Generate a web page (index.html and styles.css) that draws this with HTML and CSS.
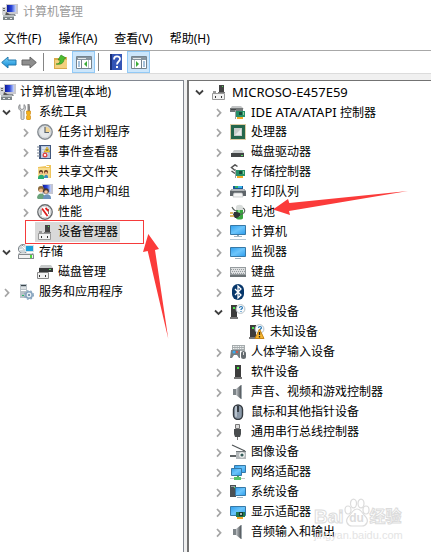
FILE: index.html
```html
<!DOCTYPE html>
<html lang="zh-CN">
<head>
<meta charset="utf-8">
<meta name="viewport" content="width=device-width, initial-scale=1">
<title>计算机管理</title>
<link rel="stylesheet" href="styles.css">
</head>
<body>
<svg class="sprite" aria-hidden="true">
  <defs>
    <linearGradient id="g-blue" x1="0" y1="0" x2="1" y2="1"><stop offset="0" stop-color="#2e9fee"/><stop offset=".5" stop-color="#6cc5fb"/><stop offset="1" stop-color="#2c9cec"/></linearGradient>
    <linearGradient id="g-navy" x1="0" y1="0" x2="1" y2="0"><stop offset="0" stop-color="#0c1a9c"/><stop offset=".5" stop-color="#2c47d8"/><stop offset="1" stop-color="#c8d8ff"/></linearGradient>
    <linearGradient id="g-grey" x1="0" y1="0" x2="1" y2="0"><stop offset="0" stop-color="#c4c8cb"/><stop offset="1" stop-color="#50565a"/></linearGradient>
    <linearGradient id="g-arrow" x1="0" y1="0" x2="0" y2="1"><stop offset="0" stop-color="#7bd4fa"/><stop offset="1" stop-color="#0c86d4"/></linearGradient>
  </defs>
  <symbol id="i-down" viewBox="0 0 13 13"><path d="M3 4.500l3.500 3.500L10 4.500" fill="none" stroke="#404040" stroke-width="1.800"/></symbol>
  <symbol id="i-right" viewBox="0 0 13 13"><path d="M5 3l3.600 3.800L5 10.600" fill="none" stroke="#a6a6a6" stroke-width="1.700"/></symbol>
  <symbol id="i-mmc" viewBox="0 0 16 16"><path d="M4 0h12v10H4z" fill="#c9c9cf"/><path d="M5 1h9v7H5z" fill="url(#g-navy)"/><path d="M8 10h5l1 2H8z" fill="#8a8f94"/><path d="M0 3h4v8H0z" fill="#d5d7da"/><path d="M1 4h2v1H1zM1 6h2v1H1z" fill="#666"/><path d="M4 8l5 3v1H3z" fill="#555"/><path d="M1 11h11v5H1z" fill="#7c8588"/><path d="M1 11h11v2H1z" fill="#b6bdbf"/><path d="M3 14h2v1H3zM8 14h2v1H8z" fill="#eee"/></symbol>
  <symbol id="i-tools" viewBox="0 0 16 16"><path d="M2 .5v4l2 1 2-1v-4c2 1.500 2 5 0 6.500v7.500c0 1.500-3 1.500-3 0V7C0 5.500 0 2 2 .5z" fill="#dcdee0" stroke="#787b7e" stroke-width=".8"/><path d="M9.500 0h2l.5 3v4H9.500z" fill="#888"/><path d="M8.500 7h4v3l-1 1 1 1v3l-1 1h-2l-1-1v-3l1-1-1-1z" fill="#f4b21c" stroke="#c98108" stroke-width=".6"/></symbol>
  <symbol id="i-clock" viewBox="0 0 16 16"><circle cx="8" cy="8" r="7.200" fill="#e5e8eb" stroke="#858b91" stroke-width="1.400"/><path d="M8 2.500A5.500 5.500 0 0 1 13.500 8H8z" fill="#f2d593"/><circle cx="8" cy="8" r="5.700" fill="none" stroke="#c3c8cd" stroke-width=".6"/><path d="M8 3v5.500h4" fill="none" stroke="#5b6670" stroke-width="1.200"/></symbol>
  <symbol id="i-event" viewBox="0 0 16 16"><path d="M2 1h12v14H2z" fill="#40567d"/><path d="M4 2h9v12H4z" fill="#b8c8e0"/><path d="M5 4h6M5 7h6M5 10h6" stroke="#fff"/><path d="M0 3h3M0 6h3M0 9h3M0 12h3" stroke="#788493"/><path d="M10 3l3 5H7z" fill="#ffd63c" stroke="#b98200" stroke-width=".5"/><path d="M10 5v2" stroke="#333"/><circle cx="8" cy="11" r="2.500" fill="#e04848"/><path d="M7 10l2 2M9 10l-2 2" stroke="#fff" stroke-width=".9"/></symbol>
  <symbol id="i-share" viewBox="0 0 16 16"><path d="M1 3l8-1 1-1h4v13H1z" fill="#eec45b"/><path d="M1 4h12v10H1z" fill="#f8dc8d"/><path d="M9 2h3v1H9z" fill="#fff"/><circle cx="4" cy="8" r="2" fill="#5b351e"/><circle cx="9" cy="8" r="2" fill="#6b3a1d"/><circle cx="4" cy="9" r="1.300" fill="#efb58b"/><circle cx="9" cy="9" r="1.300" fill="#efb58b"/><path d="M1 14c0-4 6-4 6-1v2H1z" fill="#27ad72"/><path d="M7 14c0-4 4-4 4-1v1z" fill="#3b8cbf"/></symbol>
  <symbol id="i-users" viewBox="0 0 16 16"><path d="M5 0h11v10H5z" fill="#c4c6d3"/><path d="M6 1h8v7H6z" fill="url(#g-navy)"/><circle cx="4" cy="5" r="3" fill="#8a6a3c"/><circle cx="4" cy="6.500" r="2" fill="#edb486"/><circle cx="9" cy="7" r="2.800" fill="#4c382a"/><circle cx="9" cy="8" r="1.800" fill="#f2c29d"/><path d="M0 14c0-6 8-6 8 0v1H1z" fill="#6aa37c"/><path d="M6 14c0-5 8-5 8 0v1H6z" fill="#6d93bd"/></symbol>
  <symbol id="i-perf" viewBox="0 0 16 16"><circle cx="8" cy="8" r="7.200" fill="#fff" stroke="#696d70" stroke-width="1.400"/><circle cx="8" cy="8" r="5.700" fill="none" stroke="#bfc3c5" stroke-width=".7"/><path d="M4 11V5.500M11.500 10V5" fill="none" stroke="#777" stroke-width="1"/><path d="M5 4.500l5.500 7.500M8.500 4l3 3" stroke="#df1f1f" stroke-width="1.800"/></symbol>
  <symbol id="i-device" viewBox="0 0 16 16"><path d="M8 1h5v8H8z" fill="#444"/><path d="M11 2h1v1h-1z" fill="#54d956"/><path d="M7 8h7v1H7z" fill="#777"/><path d="M2 7h3v2H2z" fill="#999"/><path d="M1.500 9.500h12v6h-12z" fill="#f2f2f2" stroke="#999"/><path d="M4 12h1v2H4zM10 12h1v2h-1z" fill="#333"/></symbol>
  <symbol id="i-storage" viewBox="0 0 16 16"><ellipse cx="5" cy="5" rx="4.600" ry="4.500" fill="#cdd5d9" stroke="#82898e"/><path d="M5 1l2 4-3-3M1 6l4-1" stroke="#fff"/><path d="M7 1h9v7H7z" fill="#d6e0e5"/><path d="M8 2h7v5H8z" fill="#1a9fd9"/><path d="M1 9h14l1 2v4H0v-4z" fill="#858a8e"/><path d="M2 9h12l1 1H1z" fill="#dde0e2"/><path d="M1 11h14v3H1z" fill="#f1f1f1"/><path d="M12 11h2v3h-2z" fill="#50d83c"/></symbol>
  <symbol id="i-diskm" viewBox="0 0 16 16"><path d="M4 1h10l2 3H2z" fill="#c7caca"/><path d="M2 4h14v4H2z" fill="#363839"/><path d="M12 5h2v1h-2z" fill="#57e064"/><path d="M.5 8.500h11v6H.5z" fill="#f2f2f2" stroke="#888"/><path d="M2 11h1v2H2zM8 11h1v2H8z" fill="#333"/></symbol>
  <symbol id="i-services" viewBox="0 0 16 16"><path d="M2 0h7v14H2z" fill="#b8c1c7"/><path d="M3 1h5v1H3z" fill="#3a454c"/><path d="M3 4h5M3 6.500h5" stroke="#fff"/><path d="M4 11h2v1H4z" fill="#26b56e"/><circle cx="11" cy="11" r="3.200" fill="#e9f0f5" stroke="#88a5bf" stroke-width="1.600"/><circle cx="11" cy="11" r="4.400" fill="none" stroke="#88a5bf" stroke-width="1.200" stroke-dasharray="1.600 2"/><circle cx="11" cy="11" r="1" fill="#587b9a"/></symbol>
  <symbol id="i-ide" viewBox="0 0 16 16"><path d="M2 2h9l3 3H0z" fill="#c3c5c6"/><path d="M0 4h13v4H0z" fill="#747879"/><path d="M1 5h5v1H1z" fill="#454849"/><path d="M6 7h9v6H6z" fill="#279067"/><path d="M9 8h3v3H9z" fill="#194c38"/><path d="M5.500 6v9" stroke="#9ca4a2"/><path d="M7 13h6v2H7z" fill="#f0ad27"/><path d="M13 8h1v3h-1z" fill="#8fd09e"/></symbol>
  <symbol id="i-cpu" viewBox="0 0 16 16"><path d="M.5.5h15v15H.5z" fill="none" stroke="#bd9a4a" stroke-dasharray="1 1"/><path d="M1 1h14v14H1z" fill="#25664b"/><path d="M4 4h8v8H4z" fill="#c9cdca"/><path d="M5 11l6-6v6z" fill="#e9ebe9"/></symbol>
  <symbol id="i-disk" viewBox="0 0 16 16"><path d="M4 6h8l2 3H2z" fill="#c9cccd"/><path d="M1 9h13v4H1z" fill="#424546"/><path d="M11 11h2v1h-2z" fill="#5ce367"/></symbol>
  <symbol id="i-stctl" viewBox="0 0 16 16"><path d="M7.500 2.500L5 .8 1.500 3.500 5 6.500M1.500 7L5 9.500" fill="none" stroke="#555" stroke-width="1.500"/><path d="M6 6h9v6H6z" fill="#279067"/><path d="M9 7h3v3H9z" fill="#194c38"/><path d="M5.500 5v9" stroke="#9ca4a2"/><path d="M7 12h6v2H7z" fill="#f0ad27"/><path d="M13 7h1v3h-1z" fill="#8fd09e"/></symbol>
  <symbol id="i-print" viewBox="0 0 16 16"><path d="M3 2h10v4H3z" fill="#19599a"/><path d="M5 2h3v2H5z" fill="#35ae65"/><path d="M8 2h4v2H8z" fill="#37b4e9"/><path d="M2 5h12l2 2v5h-3L12 9H4l-1 3H0V7z" fill="#5f656a"/><path d="M2 5h12l1 2H1z" fill="#b0b5b8"/><path d="M4 9h8l1 4H3z" fill="#f6f6f6" stroke="#b9bdbf" stroke-width=".7"/></symbol>
  <symbol id="i-battery" viewBox="0 0 16 16"><path d="M6 3h7v11c0 2-7 2-7 0z" fill="#39a53f"/><path d="M6 3c0-3 7-3 7 0v3H6z" fill="#d9dddb"/><path d="M8 6h2v7H8z" fill="#7edb7a"/><path d="M2 3c1 2 3 4 5 4M13 4c2.500 1 2.500 5-1 6l-4 1" fill="none" stroke="#5a605d" stroke-width="1.200"/><path d="M4 8h3l3 1v3l-3 2H5l-2-3z" fill="#303534"/><path d="M0 9h3M0 12h4" stroke="#d3a336" stroke-width="1.500"/></symbol>
  <symbol id="i-computer" viewBox="0 0 16 16"><path d="M.5 1.500h15v9H.5z" fill="url(#g-blue)" stroke="#3779a7"/><path d="M7 11h2v1H7z" fill="#8ea6b5"/><path d="M4 12h8v1H4z" fill="#9fb3c0"/><path d="M0 15h16v1H0z" fill="#b5c7d2"/></symbol>
  <symbol id="i-monitor" viewBox="0 0 16 16"><path d="M.5 3.500h15v9H.5z" fill="url(#g-blue)" stroke="#3779a7"/><path d="M5 14h6v1H5z" fill="#9fb3c0"/></symbol>
  <symbol id="i-keyboard" viewBox="0 0 16 16"><path d="M0 3h16v10H0z" fill="#959b9e"/><path d="M1 4h14v6H1z" fill="#dee0e1"/><path d="M1 5.500h14M2 7.500h13M1 9.500h14" stroke="#959b9e" stroke-dasharray="1 1"/><path d="M0 11h16v2H0z" fill="#6c7376"/></symbol>
  <symbol id="i-bt" viewBox="0 0 16 16"><rect x="2" width="12" height="16" rx="6" fill="#07376b"/><path d="M5 5l6 6-3 3V2l3 3-6 6" fill="none" stroke="#fff" stroke-width="1.300"/></symbol>
  <symbol id="i-unknown" viewBox="0 0 16 16"><path d="M1 1h6v12H1z" fill="#3c3c3c"/><path d="M0 13h8v2H0z" fill="#777"/><path d="M3 3h2v2H3z" fill="#4ce44d"/><circle cx="10.500" cy="5" r="4.400" fill="#f8fbfd" stroke="#b5c0c7"/><path d="M9.500 4c0-2 3-2 3 0L11 5.500V6M11 7v1" fill="none" stroke="#2476b7" stroke-width="1.100"/></symbol>
  <symbol id="i-warn" viewBox="0 0 16 16"><use href="#i-unknown"/><path d="M10.500 5l4.500 9.500H6z" fill="#f6b52d" stroke="#c4841a"/><path d="M10.500 8v3M10.500 12v1.500" stroke="#222" stroke-width="1.300"/></symbol>
  <symbol id="i-hid" viewBox="0 0 16 16"><path d="M2 1h13v6H2z" fill="#a5abad"/><path d="M3 2.500h11M3 4.500h11" stroke="#f2f4f4" stroke-dasharray="1.500 .8"/><path d="M1 6h9v8H9L7 11H4l-2 3H0z" fill="#757d81"/><circle cx="4" cy="8" r="1.500" fill="#38aaf0"/><circle cx="7" cy="8" r="1" fill="#ed4c3e"/><rect x="11" y="7" width="5" height="8" rx="2.500" fill="#656c70"/><path d="M13.500 8v3" stroke="#ddd"/></symbol>
  <symbol id="i-soft" viewBox="0 0 16 16"><path d="M5 1h6v12H5z" fill="#3d3d3d"/><path d="M4 13h8v2H4z" fill="#777"/><path d="M7 3h2v2H7z" fill="#42e442"/></symbol>
  <symbol id="i-sound" viewBox="0 0 16 16"><path d="M3 5h3v6H3z" fill="#7d8488"/><path d="M6 5l5-4v14l-5-4z" fill="url(#g-grey)"/><path d="M11 1h1v14h-1z" fill="#9fa8ad"/></symbol>
  <symbol id="i-mouse" viewBox="0 0 16 16"><rect x="3.500" y="1" width="9" height="14.500" rx="4.500" fill="#8a98a7" stroke="#343a40" stroke-width="1.400"/><rect x="5" y="2" width="2" height="11" rx="1" fill="#b7c2cc"/><path d="M8 2v6" stroke="#20262b" stroke-width="1.600"/></symbol>
  <symbol id="i-usb" viewBox="0 0 16 16"><path d="M5.500.5h4v4h-4z" fill="#ddd" stroke="#777"/><path d="M4 5h7v5l-1 3H5l-1-3z" fill="#4a4d4f"/><path d="M7 13h1v3H7z" fill="#777"/></symbol>
  <symbol id="i-camera" viewBox="0 0 16 16"><path d="M2 1l13 6" stroke="#515658" stroke-width="1.300"/><path d="M6 7h10v8H6z" fill="#b3b8ba"/><path d="M6 7h10v1H6z" fill="#72787b"/><circle cx="12" cy="11" r="2.800" fill="#f5f5f5"/><circle cx="12" cy="11" r="1.600" fill="#345c59"/><path d="M0 11h6v2H0z" fill="#606567"/></symbol>
  <symbol id="i-net" viewBox="0 0 16 16"><path d="M4.500 1.500h11v7h-11z" fill="url(#g-blue)" stroke="#3779a7"/><path d="M1.500 4.500h10v7h-10z" fill="url(#g-blue)" stroke="#3779a7"/><path d="M7 12h2v2H7z" fill="#4da65b"/><path d="M0 14h15v1H0z" fill="#c2cbc9"/><path d="M4 13h7v3H4z" fill="#56c46a"/></symbol>
  <symbol id="i-system" viewBox="0 0 16 16"><path d="M0 1h6v12H0z" fill="#4a5054"/><path d="M1 2h4v1H1z" fill="#9aa1a5"/><path d="M4 3h1v1H4z" fill="#51e55a"/><path d="M5.500 3.500h10v8h-10z" fill="url(#g-blue)" stroke="#3779a7"/><path d="M7 13h6v1H7z" fill="#9fb3c0"/></symbol>
  <symbol id="i-display" viewBox="0 0 16 16"><path d="M.5 2.500h15v9H.5z" fill="url(#g-blue)" stroke="#3779a7"/><path d="M6 8h9v5H6z" fill="#20784e"/><path d="M9 8h4v4H9z" fill="#17372f"/><path d="M10 9h2v2h-2z" fill="#a8b8ac"/><path d="M7 13h6v2H7z" fill="#efa427"/></symbol>
</svg>

<header class="title-bar">
  <svg class="icon" aria-hidden="true"><use href="#i-mmc"/></svg>
  <h1 class="title">计算机管理</h1>
</header>
<nav class="menu-bar">
  <button type="button">文件(F)</button>
  <button type="button">操作(A)</button>
  <button type="button">查看(V)</button>
  <button type="button">帮助(H)</button>
</nav>
<div class="tool-bar">
  <button type="button" class="tool" aria-label="后退"><svg class="icon" viewBox="0 0 16 16"><path d="M.7 8.500L7 3v3h8v5H7v3z" fill="url(#g-arrow)" stroke="#2378ac"/></svg></button>
  <button type="button" class="tool" aria-label="前进"><svg class="icon" viewBox="0 0 16 16"><path d="M15.300 8.500L9 3v3H1v5h8v3z" fill="#8e8e8e" stroke="#646464"/></svg></button>
  <span class="rule"></span>
  <button type="button" class="tool" aria-label="上一级"><svg class="icon" viewBox="0 0 16 16"><path d="M1 4h5l1 1h7v10H1z" fill="#d9a94b"/><path d="M9 3h5v3H9z" fill="#e3b65a"/><path d="M2 6h12v8H2z" fill="#f4d07d"/><path d="M3 10c3 0 4-1 4-4H5l3-5 5 3-2 1c0 4-3 6-8 5z" fill="#4dbc33" stroke="#278514" stroke-width=".6"/></svg></button>
  <button type="button" class="tool tool-on" aria-label="显示控制台树"><svg class="icon" viewBox="0 0 16 16"><path d="M.5 2.500h15v12H.5z" fill="#fff" stroke="#76838d"/><path d="M1 3h14v3H1z" fill="#87949e"/><path d="M2 4h8v1H2z" fill="#e4e8ea"/><path d="M5.500 6v8" stroke="#76838d"/><path d="M2 8h2M2 10h2M2 12h2" stroke="#4f86b9"/><path d="M11 7v6l-3-3z" fill="#3cac37"/><path d="M12.500 6v8" stroke="#b5bec4"/></svg></button>
  <span class="rule"></span>
  <button type="button" class="tool" aria-label="帮助"><svg class="icon" viewBox="0 0 16 16"><path d="M2 0h12v16H2z" fill="#3455b6"/><path d="M2 0h2v16H2z" fill="#1c3179"/><path d="M6 5.500c0-4 6-4 6-.5C12 7.500 9 7.500 9 10.500" fill="none" stroke="#fff" stroke-width="1.800"/><path d="M8 12h2v2H8z" fill="#fff"/></svg></button>
  <button type="button" class="tool tool-on" aria-label="显示操作窗格"><svg class="icon" viewBox="0 0 16 16"><path d="M.5 2.500h15v12H.5z" fill="#fff" stroke="#76838d"/><path d="M1 3h14v3H1z" fill="#87949e"/><path d="M2 4h8v1H2z" fill="#e4e8ea"/><path d="M10.500 6v8" stroke="#76838d"/><path d="M12 8h2M12 10h2M12 12h2" stroke="#4f86b9"/><path d="M5 7v6l3-3z" fill="#3cac37"/><path d="M3.500 6v8" stroke="#b5bec4"/></svg></button>
</div>

<main class="panes">
  <section class="pane pane-nav" aria-label="控制台树">
    <div class="row root"><svg class="icon"><use href="#i-mmc"/></svg><span>计算机管理(本地)</span></div>
    <ul>
      <li>
        <div class="row"><button type="button" class="toggle" aria-expanded="true" aria-label="系统工具"><svg><use href="#i-down"/></svg></button><svg class="icon"><use href="#i-tools"/></svg><span>系统工具</span></div>
        <ul class="nested">
          <li class="row"><button type="button" class="toggle" aria-label="任务计划程序"><svg><use href="#i-right"/></svg></button><svg class="icon"><use href="#i-clock"/></svg><span>任务计划程序</span></li>
          <li class="row"><button type="button" class="toggle" aria-label="事件查看器"><svg><use href="#i-right"/></svg></button><svg class="icon"><use href="#i-event"/></svg><span>事件查看器</span></li>
          <li class="row"><button type="button" class="toggle" aria-label="共享文件夹"><svg><use href="#i-right"/></svg></button><svg class="icon"><use href="#i-share"/></svg><span>共享文件夹</span></li>
          <li class="row"><button type="button" class="toggle" aria-label="本地用户和组"><svg><use href="#i-right"/></svg></button><svg class="icon"><use href="#i-users"/></svg><span>本地用户和组</span></li>
          <li class="row"><button type="button" class="toggle" aria-label="性能"><svg><use href="#i-right"/></svg></button><svg class="icon"><use href="#i-perf"/></svg><span>性能</span></li>
          <li class="row leaf marked"><span class="selected"><svg class="icon"><use href="#i-device"/></svg><span>设备管理器</span></span>
            <span class="mark-box"></span>
            <svg class="mark-up" viewBox="0 0 26 105" aria-hidden="true"><path d="M5.300 0L16 15l-4 1 13.300 89L4.700 17 0 18z" fill="#fb3b3a"/></svg></li>
        </ul>
      </li>
      <li>
        <div class="row"><button type="button" class="toggle" aria-expanded="true" aria-label="存储"><svg><use href="#i-down"/></svg></button><svg class="icon"><use href="#i-storage"/></svg><span>存储</span></div>
        <ul class="nested">
          <li class="row leaf"><svg class="icon"><use href="#i-diskm"/></svg><span>磁盘管理</span></li>
        </ul>
      </li>
      <li class="row"><button type="button" class="toggle" aria-label="服务和应用程序"><svg><use href="#i-right"/></svg></button><svg class="icon"><use href="#i-services"/></svg><span>服务和应用程序</span></li>
    </ul>
  </section>

  <section class="pane pane-devices" aria-label="设备">
    <div class="row"><button type="button" class="toggle" aria-expanded="true" aria-label="MICROSO-E457E59"><svg><use href="#i-down"/></svg></button><svg class="icon"><use href="#i-device"/></svg><span class="latin">MICROSO-E457E59</span></div>
    <ul class="nested">
      <li class="row"><button type="button" class="toggle" aria-label="IDE ATA/ATAPI 控制器"><svg><use href="#i-right"/></svg></button><svg class="icon"><use href="#i-ide"/></svg><span><span class="latin">IDE ATA/ATAPI </span>控制器</span></li>
      <li class="row"><button type="button" class="toggle" aria-label="处理器"><svg><use href="#i-right"/></svg></button><svg class="icon"><use href="#i-cpu"/></svg><span>处理器</span></li>
      <li class="row"><button type="button" class="toggle" aria-label="磁盘驱动器"><svg><use href="#i-right"/></svg></button><svg class="icon"><use href="#i-disk"/></svg><span>磁盘驱动器</span></li>
      <li class="row"><button type="button" class="toggle" aria-label="存储控制器"><svg><use href="#i-right"/></svg></button><svg class="icon"><use href="#i-stctl"/></svg><span>存储控制器</span></li>
      <li class="row"><button type="button" class="toggle" aria-label="打印队列"><svg><use href="#i-right"/></svg></button><svg class="icon"><use href="#i-print"/></svg><span>打印队列</span></li>
      <li class="row marked"><button type="button" class="toggle" aria-label="电池"><svg><use href="#i-right"/></svg></button><svg class="icon"><use href="#i-battery"/></svg><span>电池</span>
        <svg class="mark-left" viewBox="0 0 136 25" aria-hidden="true"><path d="M0 18.500L15 8l1.300 4L135 0 16 20l1 4z" fill="#fb3b3a"/></svg></li>
      <li class="row"><button type="button" class="toggle" aria-label="计算机"><svg><use href="#i-right"/></svg></button><svg class="icon"><use href="#i-computer"/></svg><span>计算机</span></li>
      <li class="row"><button type="button" class="toggle" aria-label="监视器"><svg><use href="#i-right"/></svg></button><svg class="icon"><use href="#i-monitor"/></svg><span>监视器</span></li>
      <li class="row"><button type="button" class="toggle" aria-label="键盘"><svg><use href="#i-right"/></svg></button><svg class="icon"><use href="#i-keyboard"/></svg><span>键盘</span></li>
      <li class="row"><button type="button" class="toggle" aria-label="蓝牙"><svg><use href="#i-right"/></svg></button><svg class="icon"><use href="#i-bt"/></svg><span>蓝牙</span></li>
      <li>
        <div class="row"><button type="button" class="toggle" aria-expanded="true" aria-label="其他设备"><svg><use href="#i-down"/></svg></button><svg class="icon"><use href="#i-unknown"/></svg><span>其他设备</span></div>
        <ul class="nested">
          <li class="row leaf"><svg class="icon"><use href="#i-warn"/></svg><span>未知设备</span></li>
        </ul>
      </li>
      <li class="row"><button type="button" class="toggle" aria-label="人体学输入设备"><svg><use href="#i-right"/></svg></button><svg class="icon"><use href="#i-hid"/></svg><span>人体学输入设备</span></li>
      <li class="row"><button type="button" class="toggle" aria-label="软件设备"><svg><use href="#i-right"/></svg></button><svg class="icon"><use href="#i-soft"/></svg><span>软件设备</span></li>
      <li class="row"><button type="button" class="toggle" aria-label="声音、视频和游戏控制器"><svg><use href="#i-right"/></svg></button><svg class="icon"><use href="#i-sound"/></svg><span>声音、视频和游戏控制器</span></li>
      <li class="row"><button type="button" class="toggle" aria-label="鼠标和其他指针设备"><svg><use href="#i-right"/></svg></button><svg class="icon"><use href="#i-mouse"/></svg><span>鼠标和其他指针设备</span></li>
      <li class="row"><button type="button" class="toggle" aria-label="通用串行总线控制器"><svg><use href="#i-right"/></svg></button><svg class="icon"><use href="#i-usb"/></svg><span>通用串行总线控制器</span></li>
      <li class="row"><button type="button" class="toggle" aria-label="图像设备"><svg><use href="#i-right"/></svg></button><svg class="icon"><use href="#i-camera"/></svg><span>图像设备</span></li>
      <li class="row"><button type="button" class="toggle" aria-label="网络适配器"><svg><use href="#i-right"/></svg></button><svg class="icon"><use href="#i-net"/></svg><span>网络适配器</span></li>
      <li class="row"><button type="button" class="toggle" aria-label="系统设备"><svg><use href="#i-right"/></svg></button><svg class="icon"><use href="#i-system"/></svg><span>系统设备</span></li>
      <li class="row"><button type="button" class="toggle" aria-label="显示适配器"><svg><use href="#i-right"/></svg></button><svg class="icon"><use href="#i-display"/></svg><span>显示适配器</span></li>
      <li class="row"><button type="button" class="toggle" aria-label="音频输入和输出"><svg><use href="#i-right"/></svg></button><svg class="icon"><use href="#i-sound"/></svg><span>音频输入和输出</span></li>
    </ul>
    <div class="watermark">
      <div class="wm-brand"><span class="wm-latin">Bai</span><span class="wm-paw"><svg viewBox="0 0 26 29" aria-hidden="true"><g fill="#fff" stroke="#dcdcdc" stroke-width="1.200"><ellipse cx="4" cy="12" rx="3" ry="4"/><ellipse cx="9.500" cy="5.500" rx="3" ry="4.300"/><ellipse cx="17" cy="5.500" rx="3" ry="4.300"/><ellipse cx="22" cy="12" rx="3" ry="4"/><path d="M13 11c4 0 5 4 8 7 5 5 1 10-3 10H8c-4 0-8-5-3-10 3-3 4-7 8-7z"/></g></svg><span class="wm-du">du</span></span><span class="wm-cjk">经验</span></div>
      <div class="wm-site">jingyan.baidu.com</div>
    </div>
  </section>
</main>
</body>
</html>
```
FILE: styles.css
```css
* {
  box-sizing: border-box;
}

body {
  display: flex;
  flex-direction: column;
  min-height: 100vh;
  margin: 0;
  background: #f0f0f0;
  color: #000;
  font: 12px/20px "Noto Sans", "Noto Sans CJK SC", sans-serif;
}

button {
  margin: 0;
  padding: 0;
  border: 0;
  background: none;
  color: inherit;
  font: inherit;
}

ul {
  margin: 0;
  padding: 0;
  list-style: none;
}

svg {
  display: block;
}

.sprite {
  position: absolute;
  width: 0;
  height: 0;
}

.icon {
  flex: none;
  width: 16px;
  height: 16px;
}

.title-bar {
  display: flex;
  align-items: center;
  gap: 5px;
  height: 24px;
  padding: 0 2px;
  background: #fff;
}

.title {
  margin: 0;
  color: #999;
  font-size: 12px;
  font-weight: 400;
}

.menu-bar {
  display: flex;
  gap: 17px;
  height: 26px;
  padding: 5px 4px 1px;
  background: #fff;
}

.tool-bar {
  display: flex;
  align-items: center;
  height: 24px;
  border-top: 1px solid #a8a8a8;
  border-bottom: 1px solid #dcdcdc;
  background: #fff;
}

.tool {
  display: grid;
  place-items: center;
  width: 23px;
  height: 22px;
}

.tool:first-child {
  width: 17px;
}

.tool-on {
  border: 1px solid #92c9f5;
  background: #cce6fb;
}

.rule {
  width: 1px;
  height: 18px;
  margin: 0 5px 0 3px;
  background: #858585;
}

.panes {
  display: flex;
  flex: 1;
  gap: 3px;
  margin-top: 6px;
}

.pane {
  position: relative;
  padding-top: 1px;
  border: 0 solid #828790;
  border-top-width: 1px;
  background: #fff;
  white-space: nowrap;
}

.pane-nav {
  flex: 0 0 184px;
  border-right-width: 1px;
}

.pane-devices {
  flex: 1;
  min-width: 0;
  padding-left: 4px;
  border-color: #737373;
  border-left-width: 2px;
}

.row {
  display: flex;
  align-items: center;
  gap: 5px;
  height: 20px;
}

.root {
  gap: 4px;
}

.nested {
  padding-left: 19px;
}

.leaf {
  padding-left: 18px;
}

.latin {
  font-size: 13px;
}

.toggle {
  width: 13px;
  height: 13px;
}

.toggle svg {
  width: 13px;
  height: 13px;
}

.selected {
  display: flex;
  align-items: center;
  gap: 5px;
  margin: 0 -2px;
  padding: 0 2px;
  background: #d9d9d9;
}

.marked {
  position: relative;
}

.mark-box {
  position: absolute;
  top: -2px;
  left: 6px;
  width: 119px;
  height: 24px;
  border: 1px solid #f53b3b;
}

.mark-up {
  position: absolute;
  z-index: 1;
  top: 12px;
  left: 124px;
  width: 26px;
  height: 105px;
}

.mark-left {
  position: absolute;
  z-index: 1;
  top: -11px;
  left: 61px;
  width: 136px;
  height: 25px;
}

.watermark {
  position: absolute;
  top: 417px;
  left: 125px;
  color: #fff;
  font-family: "Liberation Sans", "Noto Sans CJK SC", sans-serif;
  -webkit-text-stroke: 1px #dcdcdc;
}

.wm-brand {
  display: flex;
  align-items: flex-end;
  height: 29px;
}

.wm-latin {
  font-size: 19px;
  font-weight: 700;
  line-height: 20px;
}

.wm-paw {
  position: relative;
  width: 26px;
}

.wm-du {
  position: absolute;
  inset: 12px 0 0;
  color: #dcdcdc;
  font-size: 12px;
  font-weight: 700;
  line-height: 16px;
  text-align: center;
  -webkit-text-stroke: 0;
}

.wm-cjk {
  font-size: 16px;
  font-weight: 700;
  line-height: 20px;
}

.wm-site {
  margin-top: 1px;
  color: #e4e4e4;
  font-size: 11px;
  line-height: 14px;
  -webkit-text-stroke: 0;
}
```
